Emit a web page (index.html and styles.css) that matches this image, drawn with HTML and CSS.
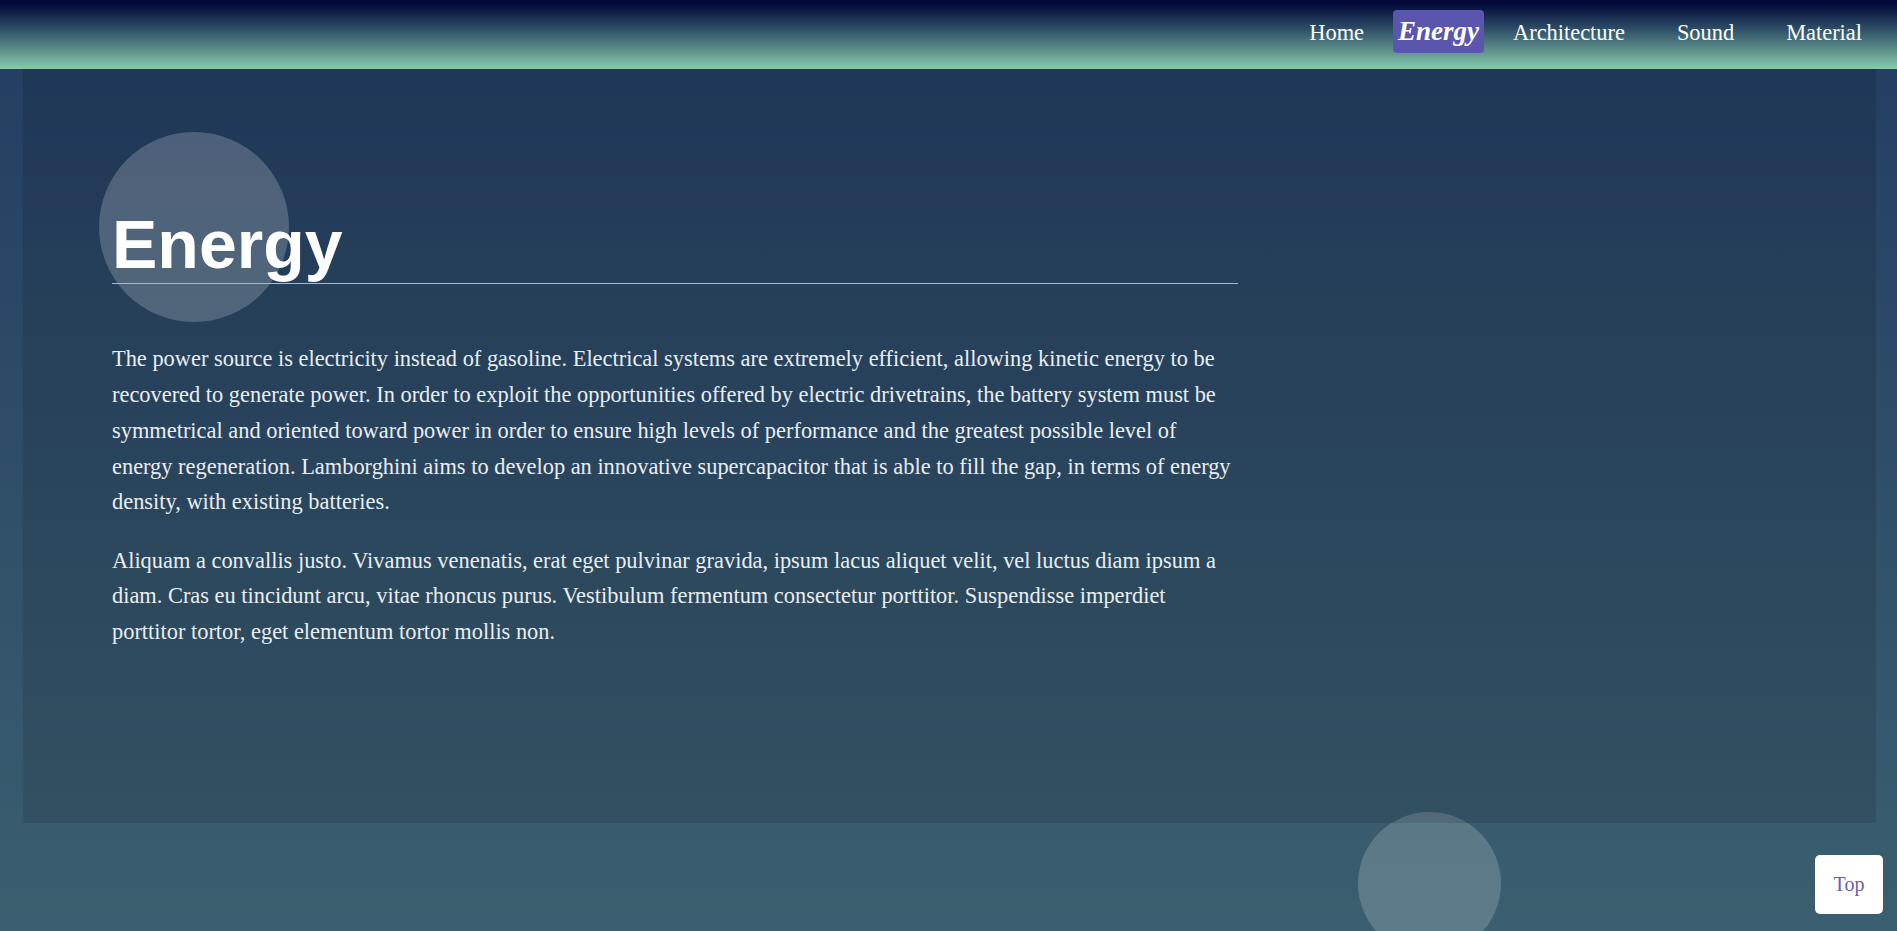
FILE: index.html
```html
<!DOCTYPE html>
<html lang="en">
<head>
<meta charset="utf-8">
<title>Energy</title>
<link rel="stylesheet" href="styles.css">
</head>
<body>
<header class="site-header">
  <nav class="main-nav">
    <ul class="nav-list">
      <li class="nav-item"><a class="nav-link" href="#">Home</a></li>
      <li class="nav-item"><a class="nav-link is-active" href="#">Energy</a></li>
      <li class="nav-item"><a class="nav-link" href="#">Architecture</a></li>
      <li class="nav-item nav-item-wide"><a class="nav-link" href="#">Sound</a></li>
      <li class="nav-item nav-item-wide"><a class="nav-link" href="#">Material</a></li>
    </ul>
  </nav>
</header>
<main class="content-section">
  <article class="article">
    <h1 class="article-title">Energy</h1>
    <p class="article-text">The power source is electricity instead of gasoline. Electrical systems are extremely efficient, allowing kinetic energy to be recovered to generate power. In order to exploit the opportunities offered by electric drivetrains, the battery system must be symmetrical and oriented toward power in order to ensure high levels of performance and the greatest possible level of energy regeneration. Lamborghini aims to develop an innovative supercapacitor that is able to fill the gap, in terms of energy density, with existing batteries.</p>
    <p class="article-text">Aliquam a convallis justo. Vivamus venenatis, erat eget pulvinar gravida, ipsum lacus aliquet velit, vel luctus diam ipsum a diam. Cras eu tincidunt arcu, vitae rhoncus purus. Vestibulum fermentum consectetur porttitor. Suspendisse imperdiet porttitor tortor, eget elementum tortor mollis non.</p>
  </article>
</main>
<footer class="site-footer">
  <span class="footer-circle"></span>
</footer>
<a class="top-button" href="#">Top</a>
</body>
</html>
```

FILE: styles.css
```css
html, body {
  margin: 0;
  padding: 0;
}

body {
  height: 931px;
  overflow: hidden;
  background: linear-gradient(180deg, #233c61 0%, #3b5f6f 100%);
  font-family: "Liberation Serif", "Times New Roman", serif;
  color: #fff;
}

.site-header {
  height: 69px;
  box-sizing: border-box;
  padding: 10px 30px 0 0;
  background: linear-gradient(180deg, #010737 0%, #020a3a 6%, #2b4a64 40%, #5a8a87 70%, #87cba9 100%);
  display: flex;
  justify-content: flex-end;
}

.nav-list {
  list-style: none;
  margin: 0;
  padding: 0;
  display: flex;
  align-items: baseline;
  gap: 24px;
}

.nav-item-wide {
  margin-left: 18px;
}

.nav-link {
  display: block;
  padding: 6px 5px;
  font-size: 22.4px;
  color: #fff;
  text-decoration: none;
}

.nav-link.is-active {
  background: #5b56ad;
  border-radius: 4px;
  font-size: 27px;
  font-weight: bold;
  font-style: italic;
}

.content-section {
  position: relative;
  z-index: 1;
  height: 754px;
  box-sizing: border-box;
  margin: 0 21px 0 23px;
  padding: 136px 0 0 89px;
  background: rgba(0, 0, 0, 0.11);
}

.article {
  width: 1126px;
}

.article-title {
  position: relative;
  margin: 0 0 57px;
  font-family: "Liberation Sans", Arial, sans-serif;
  font-weight: bold;
  font-size: 68px;
  line-height: normal;
  color: #fff;
  border-bottom: 1px solid #c2c44c;
}

.article-title::before {
  content: "";
  position: absolute;
  left: -13px;
  top: -73px;
  width: 190px;
  height: 190px;
  border-radius: 50%;
  background: rgba(255, 255, 255, 0.2);
  z-index: -1;
}

.article-text {
  margin: 0 0 22.4px;
  font-size: 22.4px;
  line-height: 1.6;
  color: #e9eef3;
}

.site-footer {
  position: relative;
  height: 108px;
}

.footer-circle {
  position: absolute;
  left: 1358px;
  top: -11px;
  width: 143px;
  height: 143px;
  border-radius: 50%;
  background: rgba(255, 255, 255, 0.18);
}

.top-button {
  position: fixed;
  right: 14px;
  bottom: 17px;
  width: 68px;
  height: 59px;
  display: flex;
  align-items: center;
  justify-content: center;
  background: #fff;
  border-radius: 5px;
  color: #6a5fae;
  font-size: 20px;
  text-decoration: none;
  z-index: 5;
}
```
